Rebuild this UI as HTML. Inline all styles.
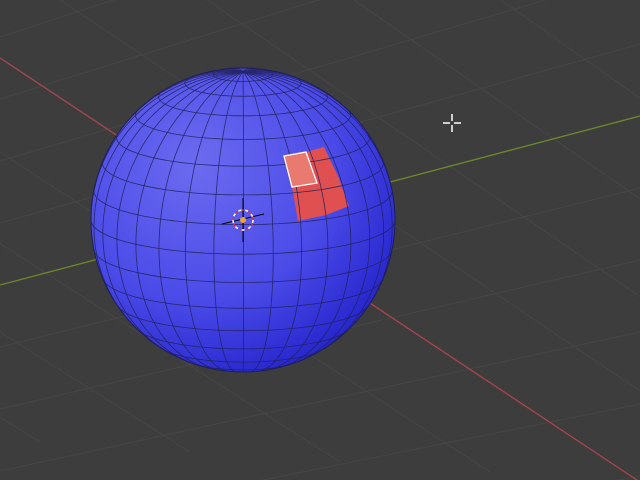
<!DOCTYPE html>
<html><head><style>html,body{margin:0;padding:0;background:#3d3d3d;overflow:hidden;width:640px;height:480px}svg{display:block}</style></head>
<body>
<svg id="s" width="640" height="480" viewBox="0 0 640 480" xmlns="http://www.w3.org/2000/svg">
<defs>
<radialGradient id="g" cx="0.35" cy="0.32" r="0.75">
<stop offset="0" stop-color="#6b6bf0"/><stop offset="0.6" stop-color="#4a4ae8"/><stop offset="1" stop-color="#2424cc"/>
</radialGradient>
</defs>
<rect width="640" height="480" fill="#3d3d3d"/>
<g id="grid" stroke="#464646" stroke-width="1" fill="none"></g>
<line x1="0" y1="58" x2="640" y2="482" stroke="#a8434f" stroke-width="1.3"/>
<line x1="0" y1="285" x2="640" y2="116" stroke="#6b8a2a" stroke-width="1.3"/>
<circle cx="243" cy="220" r="152" fill="url(#g)" stroke="#1e1e60" stroke-width="1"/>
<polygon points="306,152 324,147 338,176 317,183" fill="#e05050"/>
<polygon points="292,187 317,183 326,215 298,221" fill="#e05050"/>
<polygon points="317,183 338,176 349,206 326,215" fill="#e05050"/>
<g id="mesh" stroke="#20205a" stroke-width="0.8" fill="none" opacity="0.85"></g>
<polygon points="284,156 306,152 317,183 292,187" fill="#e87a70" stroke="#ffffff" stroke-width="1.3"/>
<g stroke="#000" stroke-width="1"><line x1="243" y1="198" x2="243" y2="242"/><line x1="222" y1="224" x2="264" y2="214"/></g>
<circle cx="243" cy="220" r="10" fill="none" stroke="#ffffff" stroke-width="1.5" stroke-dasharray="4 3"/>
<circle cx="243" cy="220" r="10" fill="none" stroke="#d03040" stroke-width="1.5" stroke-dasharray="3 4" stroke-dashoffset="4"/>
<circle cx="243" cy="220" r="3" fill="#f0a030"/>
<g stroke="#ffffff" stroke-width="1.5"><line x1="443" y1="123" x2="450" y2="123"/><line x1="454" y1="123" x2="461" y2="123"/><line x1="452" y1="114" x2="452" y2="121"/><line x1="452" y1="125" x2="452" y2="132"/></g>
</svg>
<script>
var NS="http://www.w3.org/2000/svg";
function L(g,a,b,c,d){var l=document.createElementNS(NS,"line");l.setAttribute("x1",a);l.setAttribute("y1",b);l.setAttribute("x2",c);l.setAttribute("y2",d);g.appendChild(l);}
var grid=document.getElementById("grid");
for(var i=-12;i<14;i++){var y0=285+i*62,y1=116+i*72;L(grid,0,y0,640,y1);}
for(var i=-8;i<10;i++){var x=i*150;L(grid,x-300,58-200,x+640,482+ (i*10));}
var mesh=document.getElementById("mesh");
var cx=243,cy=220,R=152,a=13*Math.PI/180,ca=Math.cos(a),sa=Math.sin(a);
function P(phi,th){var x=Math.cos(phi)*Math.sin(th),y=Math.sin(phi),z=Math.cos(phi)*Math.cos(th);
var yp=y*ca-z*sa,zp=z*ca+y*sa;return [cx+R*x,cy-R*yp,zp];}
function path(pts){var d="",on=false;for(var k=0;k<pts.length;k++){var p=pts[k];if(p[2]>0){d+=(on?"L":"M")+p[0].toFixed(1)+" "+p[1].toFixed(1);on=true;}else on=false;}
if(d){var e=document.createElementNS(NS,"path");e.setAttribute("d",d);mesh.appendChild(e);}}
var ro=0.2;
for(var r=1;r<16;r++){var phi=Math.PI/2-r*Math.PI/16,pts=[];for(var t=0;t<=128;t++)pts.push(P(phi,t*2*Math.PI/128));path(pts);}
for(var s=0;s<32;s++){var th=s*2*Math.PI/32+ro,pts=[];for(var t=0;t<=64;t++)pts.push(P(Math.PI/2-t*Math.PI/64,th));path(pts);}
</script>
</body></html>
